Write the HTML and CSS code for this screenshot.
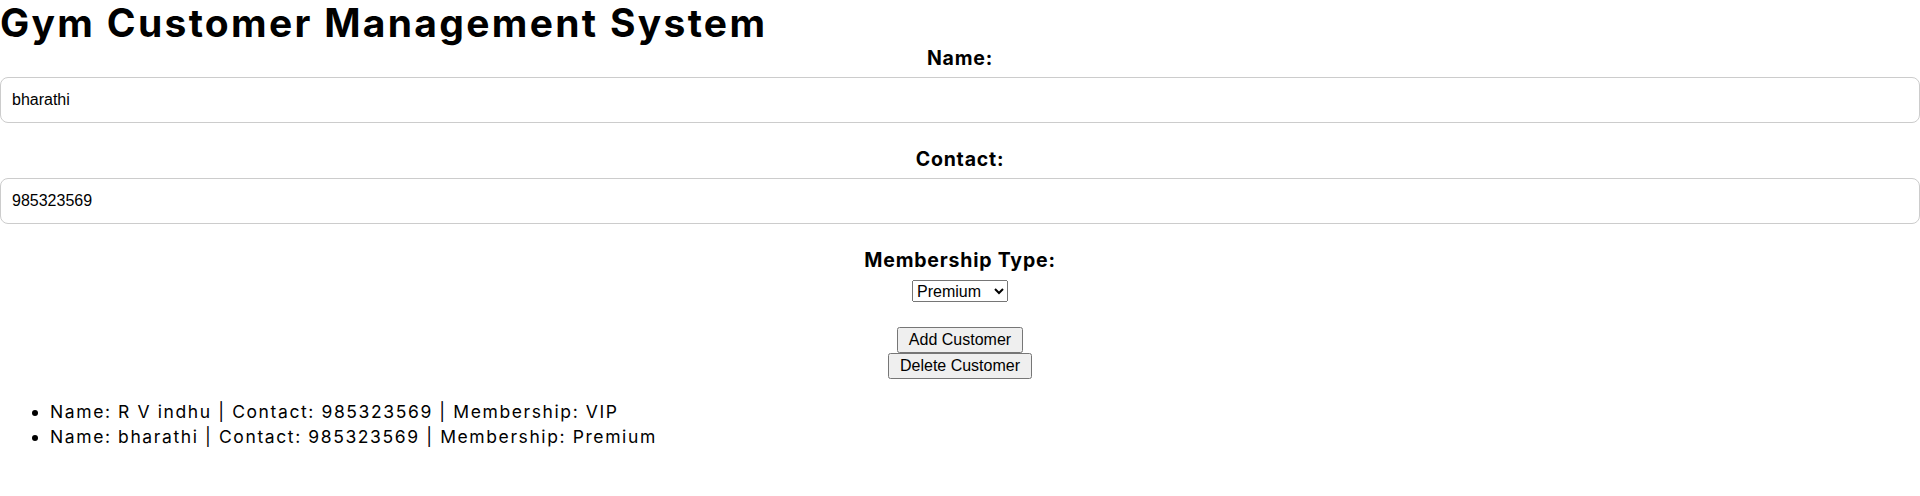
FILE: index.html
```html
<!DOCTYPE html>
<html lang="en">
<head>
<meta charset="utf-8">
<title>Gym Customer Management System</title>
<link rel="stylesheet" href="styles.css">
</head>
<body>
<h1 class="title">Gym Customer Management System</h1>
<form class="form">
  <label class="label" for="name">Name:</label>
  <input class="field" id="name" type="text" value="bharathi">
  <label class="label" for="contact">Contact:</label>
  <input class="field" id="contact" type="text" value="985323569">
  <label class="label" for="type">Membership Type:</label>
  <select class="select" id="type">
    <option>Basic</option>
    <option selected>Premium</option>
    <option>VIP</option>
  </select>
  <div class="actions">
    <button type="button" class="btn">Add Customer</button>
    <button type="button" class="btn">Delete Customer</button>
  </div>
</form>
<ul class="list">
  <li>Name: R V indhu | Contact: 985323569 | Membership: VIP</li>
  <li>Name: bharathi | Contact: 985323569 | Membership: Premium</li>
</ul>
</body>
</html>
```

FILE: styles.css
```css
body {
  margin: 0;
  font-family: Inter, "Open Sans", sans-serif;
  color: #000;
}
.title {
  margin: 0;
  font-size: 39px;
  line-height: 46px;
  font-weight: 700;
  letter-spacing: 2.3px;
}
.form {
  display: flex;
  flex-direction: column;
  align-items: center;
  text-align: center;
}
.label {
  display: block;
  font-weight: 700;
  font-size: 19.5px;
  line-height: 24px;
  letter-spacing: 0.8px;
}
.field {
  display: block;
  align-self: stretch;
  box-sizing: border-box;
  width: 100%;
  height: 46px;
  margin: 7px 0 24px;
  padding: 0 11px;
  border: 1px solid #cccccc;
  border-radius: 8px;
  background: #fff;
  color: #000;
  font: 16px "Liberation Sans", Arial, sans-serif;
}
.select {
  box-sizing: border-box;
  width: 96px;
  height: 22px;
  margin-top: 8px;
  font: 16px "Liberation Sans", Arial, sans-serif;
  color: #000;
}
.actions {
  display: flex;
  flex-direction: column;
  align-items: center;
  margin-top: 25px;
}
.btn {
  box-sizing: border-box;
  height: 26px;
  padding: 0 10px;
  font: 16px "Liberation Sans", Arial, sans-serif;
  color: #000;
}
.list {
  margin: 20px 0 0;
  padding-left: 50px;
  font-size: 17.5px;
  line-height: 25px;
  letter-spacing: 1.6px;
}
```
